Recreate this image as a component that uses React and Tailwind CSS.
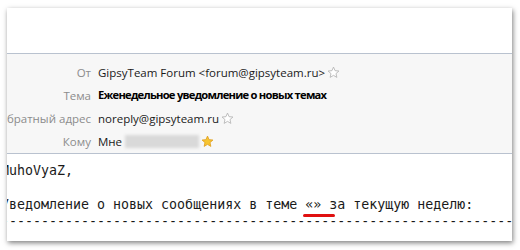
import React from 'react';

// Small star next to an address (outline = not in contacts, gold = in contacts)
const Star = ({ filled }) => (
  <svg width="13" height="13" viewBox="0 0 24 24" className="shrink-0">
    <polygon
      points="12,2 14.9,8.6 22,9.3 16.6,14 18.2,21 12,17.3 5.8,21 7.4,14 2,9.3 9.1,8.6"
      fill={filled ? '#f7c531' : '#ffffff'}
      stroke={filled ? '#e0a020' : '#b4b4b4'}
      strokeWidth="1.6"
      strokeLinejoin="round"
    />
  </svg>
);

const HeaderRow = ({ label, children }) => (
  <div className="flex items-center h-[23px]">
    {/* labels are right-aligned and may spill past the left edge */}
    <div className="w-[84px] shrink-0 flex justify-end text-[#8c8c8c] whitespace-nowrap">
      <span>{label}</span>
    </div>
    <div className="flex items-center gap-[2px] pl-[7px] text-[#1a1a1a] whitespace-nowrap">{children}</div>
  </div>
);

export default function App() {
  return (
    <div className="w-[520px] h-[250px] bg-white pt-[8px] pl-[7px]">
      <div className="w-[505px] h-[233px] bg-white overflow-hidden shadow-[1px_2px_5px_rgba(0,0,0,0.5)] flex flex-col">
        {/* top toolbar area */}
        <div className="h-[46px] bg-white border-b border-[#b9c2cf] shrink-0" />

        {/* message headers */}
        <div
          className="h-[100px] bg-[#f7f7f7] border-b border-[#b9c2cf] pt-[7px] shrink-0 text-[11.5px]"
          style={{ fontFamily: '"Open Sans", "Noto Sans", sans-serif' }}
        >
          <HeaderRow label="От">
            <span>GipsyTeam Forum &lt;forum@gipsyteam.ru&gt;</span>
            <Star />
          </HeaderRow>
          <HeaderRow label="Тема">
            <span className="font-bold text-[11.2px] tracking-[-0.75px] text-black">Еженедельное уведомление о новых темах</span>
          </HeaderRow>
          <HeaderRow label="Обратный адрес">
            <span>noreply@gipsyteam.ru</span>
            <Star />
          </HeaderRow>
          <HeaderRow label="Кому">
            <span>Мне</span>
            <span className="ml-[1px] w-[74px] h-[13px] bg-[#d9d9d9] blur-[1.5px]" />
            <Star filled />
          </HeaderRow>
        </div>

        {/* message body */}
        <div
          className="flex-1 bg-white pt-[8px] text-[13.3px] leading-[17px] text-[#1a1a1a] whitespace-pre -ml-[6px]"
          style={{ fontFamily: '"DejaVu Sans Mono", "Liberation Mono", monospace' }}
        >
          <div>MuhoVyaZ,</div>
          <div>&nbsp;</div>
          <div>
            Уведомление о новых сообщениях в теме{' '}
            <span className="relative">
              «»
              <span className="absolute left-[-2px] top-[17px] w-[32px] h-[3px] rounded-full bg-[#e01010]" />
            </span>
            {' '}за текущую неделю:
          </div>
          <div>{'-'.repeat(70)}</div>
        </div>
      </div>
    </div>
  );
}
